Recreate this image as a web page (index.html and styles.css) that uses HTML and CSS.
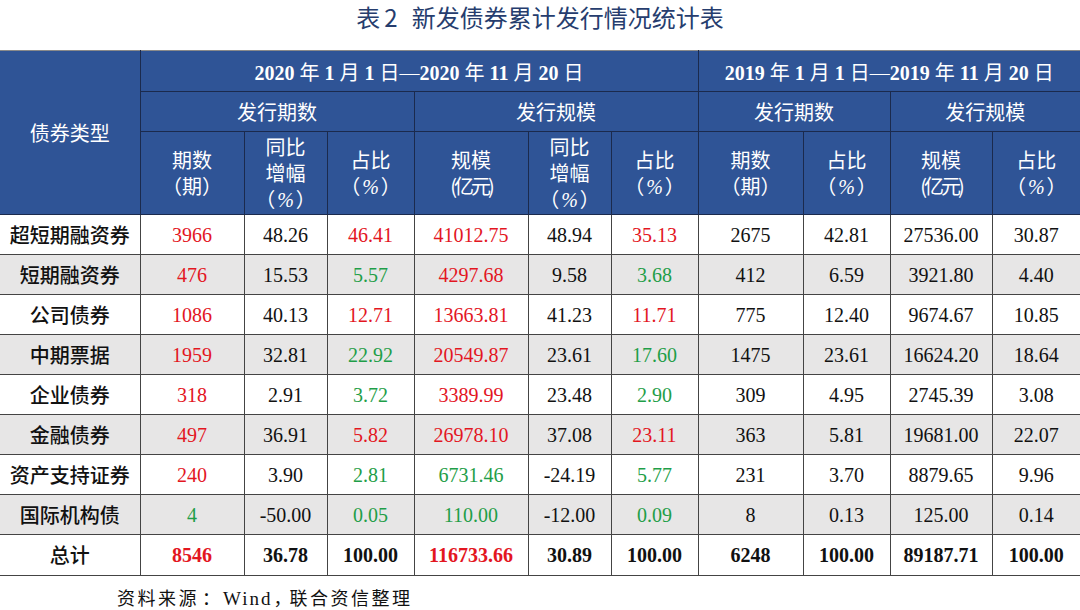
FILE: index.html
```html
<!DOCTYPE html>
<html lang="zh-CN">
<head>
<meta charset="utf-8">
<title>表2 新发债券累计发行情况统计表</title>
<link rel="stylesheet" href="styles.css">
</head>
<body>
<div class="page">
  <h1 class="title"><span class="t-biao">表</span><span class="t-num">2</span>新发债券累计发行情况统计表</h1>
  <table class="grid">
    <colgroup>
      <col class="c-type">
      <col class="c1"><col class="c2"><col class="c3"><col class="c4"><col class="c5"><col class="c6">
      <col class="c7"><col class="c8"><col class="c9"><col class="c10">
    </colgroup>
    <thead>
      <tr class="h1">
        <th rowspan="3" class="type-head">债券类型</th>
        <th colspan="6" class="period"><b>2020</b> 年 <b>1</b> 月 <b>1</b> 日—<b>2020</b> 年 <b>11</b> 月 <b>20</b> 日</th>
        <th colspan="4" class="period"><b>2019</b> 年 <b>1</b> 月 <b>1</b> 日—<b>2019</b> 年 <b>11</b> 月 <b>20</b> 日</th>
      </tr>
      <tr class="h2">
        <th colspan="3">发行期数</th>
        <th colspan="3">发行规模</th>
        <th colspan="2">发行期数</th>
        <th colspan="2">发行规模</th>
      </tr>
      <tr class="h3">
        <th>期数<br><span class="lp">（</span>期<span class="rp">）</span></th>
        <th>同比<br>增幅<br><span class="lp">（</span><span class="pct">%</span><span class="rp">）</span></th>
        <th>占比<br><span class="lp">（</span><span class="pct">%</span><span class="rp">）</span></th>
        <th>规模<br><span class="yy">(亿元)</span></th>
        <th>同比<br>增幅<br><span class="lp">（</span><span class="pct">%</span><span class="rp">）</span></th>
        <th>占比<br><span class="lp">（</span><span class="pct">%</span><span class="rp">）</span></th>
        <th>期数<br><span class="lp">（</span>期<span class="rp">）</span></th>
        <th>占比<br><span class="lp">（</span><span class="pct">%</span><span class="rp">）</span></th>
        <th>规模<br><span class="yy">(亿元)</span></th>
        <th>占比<br><span class="lp">（</span><span class="pct">%</span><span class="rp">）</span></th>
      </tr>
    </thead>
    <tbody>
      <tr>
        <td class="name">超短期融资券</td>
        <td class="red">3966</td><td>48.26</td><td class="red">46.41</td><td class="red">41012.75</td><td>48.94</td><td class="red">35.13</td>
        <td>2675</td><td>42.81</td><td>27536.00</td><td>30.87</td>
      </tr>
      <tr class="alt">
        <td class="name">短期融资券</td>
        <td class="red">476</td><td>15.53</td><td class="green">5.57</td><td class="red">4297.68</td><td>9.58</td><td class="green">3.68</td>
        <td>412</td><td>6.59</td><td>3921.80</td><td>4.40</td>
      </tr>
      <tr>
        <td class="name">公司债券</td>
        <td class="red">1086</td><td>40.13</td><td class="red">12.71</td><td class="red">13663.81</td><td>41.23</td><td class="red">11.71</td>
        <td>775</td><td>12.40</td><td>9674.67</td><td>10.85</td>
      </tr>
      <tr class="alt">
        <td class="name">中期票据</td>
        <td class="red">1959</td><td>32.81</td><td class="green">22.92</td><td class="red">20549.87</td><td>23.61</td><td class="green">17.60</td>
        <td>1475</td><td>23.61</td><td>16624.20</td><td>18.64</td>
      </tr>
      <tr>
        <td class="name">企业债券</td>
        <td class="red">318</td><td>2.91</td><td class="green">3.72</td><td class="red">3389.99</td><td>23.48</td><td class="green">2.90</td>
        <td>309</td><td>4.95</td><td>2745.39</td><td>3.08</td>
      </tr>
      <tr class="alt">
        <td class="name">金融债券</td>
        <td class="red">497</td><td>36.91</td><td class="red">5.82</td><td class="red">26978.10</td><td>37.08</td><td class="red">23.11</td>
        <td>363</td><td>5.81</td><td>19681.00</td><td>22.07</td>
      </tr>
      <tr>
        <td class="name">资产支持证券</td>
        <td class="red">240</td><td>3.90</td><td class="green">2.81</td><td class="green">6731.46</td><td>-24.19</td><td class="green">5.77</td>
        <td>231</td><td>3.70</td><td>8879.65</td><td>9.96</td>
      </tr>
      <tr class="alt">
        <td class="name">国际机构债</td>
        <td class="green">4</td><td>-50.00</td><td class="green">0.05</td><td class="green">110.00</td><td>-12.00</td><td class="green">0.09</td>
        <td>8</td><td>0.13</td><td>125.00</td><td>0.14</td>
      </tr>
      <tr class="total">
        <td class="name">总计</td>
        <td class="red">8546</td><td>36.78</td><td>100.00</td><td class="red">116733.66</td><td>30.89</td><td>100.00</td>
        <td>6248</td><td>100.00</td><td>89187.71</td><td>100.00</td>
      </tr>
    </tbody>
  </table>
  <p class="source">资料来源<span class="colon">：</span><span class="latin">Wind</span><span class="comma">，</span>联合资信整理</p>
</div>
</body>
</html>
```

FILE: styles.css
```css
html, body {
  margin: 0;
  padding: 0;
  background: #ffffff;
}

.page {
  width: 1080px;
  height: 610px;
  overflow: hidden;
}

.title {
  margin: 0;
  height: 50px;
  line-height: 34px;
  font-size: 24px;
  font-weight: normal;
  text-align: center;
  color: #263d6e;
  font-family: "Noto Sans CJK SC", "Noto Sans", sans-serif;
  box-sizing: border-box;
}

.t-biao {
  margin-right: 4px;
}

.t-num {
  margin-right: 14px;
}

.grid {
  width: 1080px;
  border-collapse: collapse;
  table-layout: fixed;
  font-family: "Liberation Serif", "Noto Sans CJK SC", serif;
  font-size: 20px;
  color: #111111;
}

.c-type { width: 140px; }
.c1 { width: 104px; }
.c2 { width: 83px; }
.c3 { width: 87px; }
.c4 { width: 114px; }
.c5 { width: 83px; }
.c6 { width: 87px; }
.c7 { width: 105px; }
.c8 { width: 87px; }
.c9 { width: 102px; }
.c10 { width: 88px; }

.grid th {
  background: #2f5496;
  color: #ffffff;
  font-weight: normal;
  font-family: "Noto Sans CJK SC", sans-serif;
  font-size: 20px;
  border: 1px solid #1b2a4d;
  padding: 0;
  text-align: center;
  vertical-align: middle;
}

.grid thead tr.h1 th {
  border-top: 1px solid #8a8a8a;
}

.grid tr.h1 th { height: 40px; }
.grid tr.h2 th { height: 39px; }
.grid tr.h3 th { height: 82px; }
.grid tr.h1 th.type-head { height: auto; }

.grid th.period {
  font-family: "Liberation Serif", "Noto Sans CJK SC", serif;
  font-size: 20px;
  font-weight: normal;
}

.grid th.period b {
  font-weight: bold;
  font-family: "Liberation Serif", serif;
}

.grid tr.h3 th {
  line-height: 26px;
}

.lp,
.rp {
  display: inline-block;
  width: 20px;
}

.lp {
  text-align: right;
}

.rp {
  text-align: left;
}

.pct {
  font-family: "Liberation Serif", serif;
  font-style: italic;
  padding: 0 2px;
}

.yy {
  letter-spacing: -3px;
}

.grid td {
  border: 1px solid #444444;
  padding: 0;
  height: 39px;
  line-height: 24px;
  text-align: center;
  vertical-align: middle;
  white-space: nowrap;
}

.grid tbody tr:first-child td {
  border-top: 1px solid #1b2a4d;
}

.grid tr.alt td {
  background: #e7e6e6;
}

.grid td.name {
  font-family: "Noto Sans CJK SC", sans-serif;
  font-weight: 500;
  color: #111111;
}

.grid td.red {
  color: #e3161f;
}

.grid td.green {
  color: #1f9e48;
}

.grid tr.total td {
  height: 40px;
  font-weight: bold;
}

.grid tr.total td.name {
  font-weight: 500;
}

.grid tr td:last-child,
.grid tr th:last-child {
  border-right: none;
}

.grid td:first-child,
.grid th:first-child {
  border-left: none;
}

.source {
  margin: 11px 0 0 0;
  padding-left: 117px;
  font-family: "Noto Sans CJK SC", sans-serif;
  font-size: 18px;
  line-height: 20px;
  letter-spacing: 2.5px;
  color: #111111;
  white-space: nowrap;
}

.source .colon {
  display: inline-block;
  width: 24px;
  text-align: center;
  letter-spacing: 0;
}

.source .comma {
  display: inline-block;
  width: 16px;
  margin-left: 1px;
  text-align: left;
  letter-spacing: 0;
}

.source .latin {
  font-family: "Liberation Serif", serif;
  font-size: 19px;
  letter-spacing: 2px;
}
```
